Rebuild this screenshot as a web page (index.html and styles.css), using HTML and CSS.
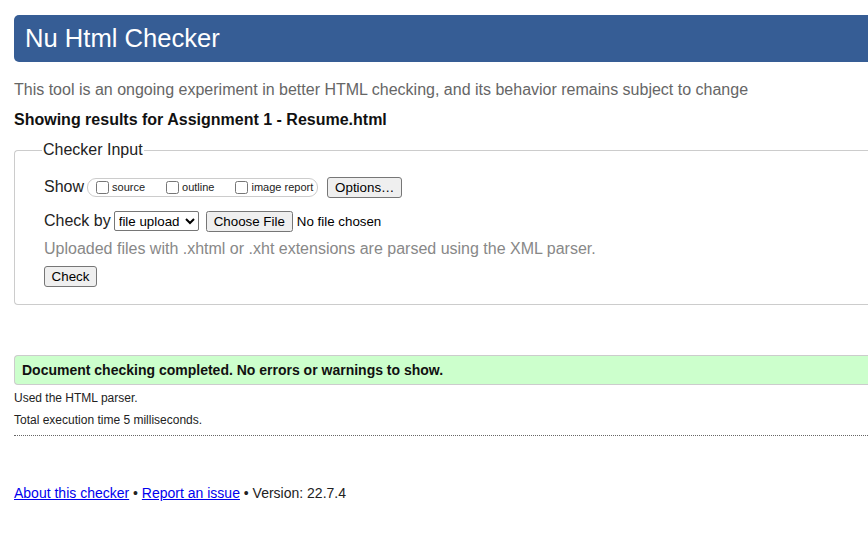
FILE: index.html
```html
<!DOCTYPE html>
<html lang="en">
<head>
<meta charset="utf-8">
<title>Nu Html Checker</title>
<link rel="stylesheet" href="styles.css">
</head>
<body>
<div class="page">
  <h1 class="banner">Nu Html Checker</h1>
  <p class="intro">This tool is an ongoing experiment in better HTML checking, and its behavior remains subject to change</p>
  <h2 class="results-title">Showing results for Assignment 1 - Resume.html</h2>
  <fieldset class="checker">
    <legend>Checker Input</legend>
    <div class="row row-show">
      <span class="row-label">Show</span>
      <span class="opts">
        <label class="opt"><input type="checkbox">source</label>
        <label class="opt"><input type="checkbox">outline</label>
        <label class="opt"><input type="checkbox">image report</label>
      </span>
      <button class="btn options" type="button">Options…</button>
    </div>
    <div class="row">
      <span class="row-label">Check by</span>
      <select class="sel"><option>file upload</option></select>
      <input class="file" type="file">
    </div>
    <p class="note">Uploaded files with .xhtml or .xht extensions are parsed using the XML parser.</p>
    <button class="btn check" type="button">Check</button>
  </fieldset>
  <p class="success">Document checking completed. No errors or warnings to show.</p>
  <p class="meta">Used the HTML parser.</p>
  <p class="meta">Total execution time 5 milliseconds.</p>
  <hr class="sep">
  <p class="footer"><a href="#">About this checker</a> • <a href="#">Report an issue</a> • Version: 22.7.4</p>
</div>
</body>
</html>
```

FILE: styles.css
```css
html, body {
  margin: 0;
  padding: 0;
  overflow: hidden;
  background: #fff;
}
body {
  font-family: "Liberation Sans", Arial, sans-serif;
  color: #111;
}
.page {
  width: 900px;
  padding: 15px 0 0 14px;
}
.banner {
  margin: 0;
  background: #365d95;
  color: #fff;
  font-weight: normal;
  font-size: 25.6px;
  line-height: 31px;
  padding: 8px 11px;
  border-radius: 5px 0 0 5px;
}
.intro {
  margin: 19px 0 0;
  font-size: 16px;
  line-height: 18px;
  color: #666;
}
.results-title {
  margin: 12px 0 0;
  font-size: 16px;
  line-height: 18px;
  font-weight: bold;
}
.checker {
  margin: 12px 0 0;
  padding: 17px 0 17px 29px;
  border: 1px solid #ccc;
  border-right: 0;
  border-radius: 4px 0 0 4px;
}
.checker legend {
  padding: 0 1px;
  margin-left: -2px;
  font-size: 16px;
  line-height: 18px;
  color: #222;
}
.row {
  display: flex;
  align-items: center;
  height: 22px;
  margin-bottom: 13px;
  font-size: 16px;
  color: #222;
}
.row-show {
  margin-bottom: 12px;
}
.row-label {
  margin-right: 3px;
}
.opts {
  display: inline-flex;
  align-items: center;
  height: 17px;
  border: 1px solid #ccc;
  border-radius: 9px;
  padding: 0 4px 0 7px;
  font-size: 11px;
}
.opt {
  display: inline-flex;
  align-items: center;
  margin-right: 20px;
}
.opt:last-child {
  margin-right: 0;
}
.opt input {
  margin: 0 3px 0 1px;
  width: 13px;
  height: 13px;
}
.btn {
  font-family: "Liberation Sans", Arial, sans-serif;
  font-size: 13.33px;
  color: #000;
  background: #efefef;
  border: 1px solid #767676;
  border-radius: 3px;
  padding: 1px 6px;
  height: 21px;
}
.options {
  margin-left: 9px;
  width: 75px;
}
.sel {
  font-family: "Liberation Sans", Arial, sans-serif;
  font-size: 13.33px;
  height: 20px;
  width: 85px;
  margin-right: 7px;
  border: 1px solid #767676;
  border-radius: 2px;
  background: #fff;
  color: #000;
}
.file {
  font-family: "Liberation Sans", Arial, sans-serif;
  font-size: 13.33px;
  color: #000;
}
.note {
  margin: -5px 0 0;
  font-size: 16px;
  line-height: 18px;
  color: #888;
}
.check {
  margin-top: 8px;
  width: 53px;
}
.success {
  margin: 50px 0 0;
  background: #ccffcc;
  border: 1px solid #ccc;
  border-right: 0;
  border-radius: 4px 0 0 4px;
  padding: 0 0 0 7px;
  height: 28px;
  line-height: 28px;
  font-size: 14px;
  font-weight: bold;
  color: #111;
}
.meta {
  margin: 6px 0 0;
  font-size: 12px;
  line-height: 14px;
  color: #222;
}
.meta + .meta {
  margin-top: 8px;
}
.sep {
  margin: 8px 0 0;
  border: 0;
  border-top: 1px dotted #666;
  height: 0;
}
.footer {
  margin: 49px 0 0;
  font-size: 14px;
  line-height: 16px;
  color: #222;
}
.footer a {
  color: #00e;
}
```
